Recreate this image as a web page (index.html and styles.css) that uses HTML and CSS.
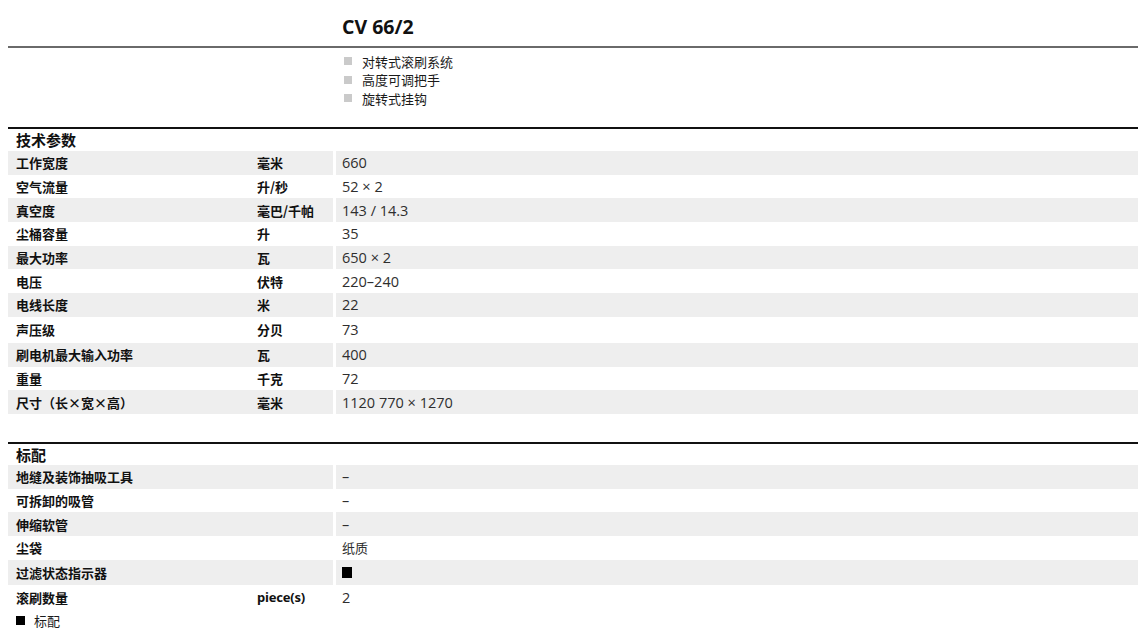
FILE: index.html
```html
<!DOCTYPE html>
<html lang="zh-CN">
<head>
<meta charset="utf-8">
<title>CV 66/2</title>
<link rel="stylesheet" href="styles.css">
</head>
<body>
<div class="page">
  <header class="head">
    <div class="head-side"></div>
    <h1 class="title">CV 66/2</h1>
  </header>
  <div class="features">
    <div class="head-side"></div>
    <ul class="feature-list">
      <li>对转式滚刷系统</li>
      <li>高度可调把手</li>
      <li>旋转式挂钩</li>
    </ul>
  </div>

  <section class="spec">
    <h2 class="spec-title">技术参数</h2>
    <div class="row alt"><div class="c-label">工作宽度</div><div class="c-unit">毫米</div><div class="c-val">660</div></div>
    <div class="row"><div class="c-label">空气流量</div><div class="c-unit">升/秒</div><div class="c-val">52 × 2</div></div>
    <div class="row alt"><div class="c-label">真空度</div><div class="c-unit">毫巴/千帕</div><div class="c-val">143 / 14.3</div></div>
    <div class="row"><div class="c-label">尘桶容量</div><div class="c-unit">升</div><div class="c-val">35</div></div>
    <div class="row alt"><div class="c-label">最大功率</div><div class="c-unit">瓦</div><div class="c-val">650 × 2</div></div>
    <div class="row"><div class="c-label">电压</div><div class="c-unit">伏特</div><div class="c-val">220–240</div></div>
    <div class="row alt"><div class="c-label">电线长度</div><div class="c-unit">米</div><div class="c-val">22</div></div>
    <div class="row tall"><div class="c-label">声压级</div><div class="c-unit">分贝</div><div class="c-val">73</div></div>
    <div class="row alt"><div class="c-label">刷电机最大输入功率</div><div class="c-unit">瓦</div><div class="c-val">400</div></div>
    <div class="row"><div class="c-label">重量</div><div class="c-unit">千克</div><div class="c-val">72</div></div>
    <div class="row alt"><div class="c-label">尺寸（长×宽×高）</div><div class="c-unit">毫米</div><div class="c-val">1120 770 × 1270</div></div>
    <div class="row-gap"></div>
  </section>

  <section class="spec">
    <h2 class="spec-title">标配</h2>
    <div class="row alt"><div class="c-label">地缝及装饰抽吸工具</div><div class="c-unit"></div><div class="c-val">–</div></div>
    <div class="row"><div class="c-label">可拆卸的吸管</div><div class="c-unit"></div><div class="c-val">–</div></div>
    <div class="row alt"><div class="c-label">伸缩软管</div><div class="c-unit"></div><div class="c-val">–</div></div>
    <div class="row"><div class="c-label">尘袋</div><div class="c-unit"></div><div class="c-val cjk">纸质</div></div>
    <div class="row alt big"><div class="c-label">过滤状态指示器</div><div class="c-unit"></div><div class="c-val"><span class="mark"></span></div></div>
    <div class="row big"><div class="c-label">滚刷数量</div><div class="c-unit latin">piece(s)</div><div class="c-val">2</div></div>
  </section>

  <p class="legend"><span class="mark small"></span>标配</p>
</div>
</body>
</html>
```

FILE: styles.css
```css
* { box-sizing: border-box; }

html, body {
  margin: 0;
  padding: 0;
  background: #ffffff;
}

body {
  padding: 8px;
  font-family: "Noto Sans", "Open Sans", "Noto Sans CJK SC", sans-serif;
  color: #111;
}

.page {
  width: 1130px;
}

.head {
  display: grid;
  grid-template-columns: 334px 1fr;
  height: 40px;
  border-bottom: 2px solid #6a6a6a;
}

.title {
  margin: 0;
  font-family: "Open Sans", "Noto Sans", "Noto Sans CJK SC", sans-serif;
  font-size: 19.5px;
  font-weight: 700;
  line-height: 38px;
  color: #111;
}

.features {
  display: grid;
  grid-template-columns: 334px 1fr;
  height: 79px;
}

.feature-list {
  list-style: none;
  margin: 0;
  padding: 4px 0 0 0;
}

.feature-list li {
  display: flex;
  align-items: center;
  height: 18.6px;
  font-family: "Noto Sans CJK SC", sans-serif;
  font-size: 13px;
  color: #1a1a1a;
}

.feature-list li::before {
  content: "";
  width: 8px;
  height: 8px;
  margin: 0 10px 0 2px;
  background: #cacaca;
}

.spec {
  border-top: 2px solid #111;
}

.spec-title {
  margin: 0;
  height: 22px;
  padding-left: 8px;
  font-family: "Noto Sans CJK SC", sans-serif;
  font-size: 15px;
  font-weight: 700;
  line-height: 22px;
  color: #111;
}

.spec + .spec .spec-title {
  height: 21px;
  line-height: 21px;
}

.row {
  display: grid;
  grid-template-columns: 242px 83px 1fr;
  height: 23.7px;
}

.row.tall { height: 26px; }
.row.big { height: 25px; }

.c-label, .c-unit, .c-val {
  display: flex;
  align-items: center;
  font-size: 13px;
  white-space: nowrap;
}

.c-label {
  padding-left: 8px;
  font-family: "Noto Sans CJK SC", sans-serif;
  font-weight: 700;
  color: #111;
}

.c-unit {
  padding-left: 7px;
  font-family: "Noto Sans CJK SC", sans-serif;
  font-weight: 700;
  color: #111;
}

.c-unit.latin {
  font-family: "Noto Sans", sans-serif;
  letter-spacing: -0.2px;
}

.c-val {
  margin-left: 3px;
  padding-left: 6px;
  font-family: "Open Sans", "Noto Sans", "Noto Sans CJK SC", sans-serif;
  font-size: 14.5px;
  color: #2e2e2e;
}

.c-val.cjk {
  font-family: "Noto Sans CJK SC", sans-serif;
  font-size: 13px;
}

.row.alt .c-label,
.row.alt .c-unit,
.row.alt .c-val {
  background: #eeeeee;
}

.row-gap {
  height: 28px;
}

.mark {
  display: inline-block;
  width: 10px;
  height: 11px;
  background: #000;
}

.mark.small {
  width: 9px;
  height: 9px;
  margin-right: 9px;
}

.legend {
  display: flex;
  align-items: center;
  margin: 0;
  height: 22px;
  padding-left: 8px;
  font-family: "Noto Sans CJK SC", sans-serif;
  font-size: 13px;
  color: #1a1a1a;
}
```
